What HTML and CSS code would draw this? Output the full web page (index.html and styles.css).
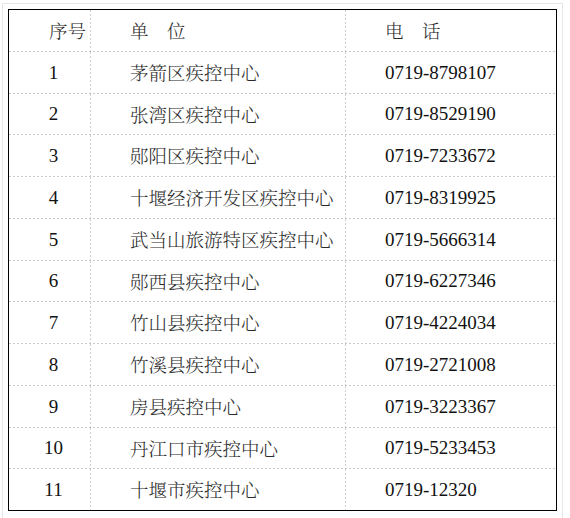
FILE: index.html
```html
<!DOCTYPE html>
<html lang="zh">
<head>
<meta charset="utf-8">
<link rel="stylesheet" href="styles.css">
</head>
<body>
<div class="frame">
  <div class="table">
    <div class="row head">
      <div class="cell c1 h1 cjk">序号</div>
      <div class="cell c2 cjk">单　位</div>
      <div class="cell c3 cjk">电　话</div>
    </div>
    <div class="row"><div class="cell c1">1</div><div class="cell c2 cjk">茅箭区疾控中心</div><div class="cell c3">0719-8798107</div></div>
    <div class="row"><div class="cell c1">2</div><div class="cell c2 cjk">张湾区疾控中心</div><div class="cell c3">0719-8529190</div></div>
    <div class="row"><div class="cell c1">3</div><div class="cell c2 cjk">郧阳区疾控中心</div><div class="cell c3">0719-7233672</div></div>
    <div class="row"><div class="cell c1">4</div><div class="cell c2 cjk">十堰经济开发区疾控中心</div><div class="cell c3">0719-8319925</div></div>
    <div class="row"><div class="cell c1">5</div><div class="cell c2 cjk">武当山旅游特区疾控中心</div><div class="cell c3">0719-5666314</div></div>
    <div class="row"><div class="cell c1">6</div><div class="cell c2 cjk">郧西县疾控中心</div><div class="cell c3">0719-6227346</div></div>
    <div class="row"><div class="cell c1">7</div><div class="cell c2 cjk">竹山县疾控中心</div><div class="cell c3">0719-4224034</div></div>
    <div class="row"><div class="cell c1">8</div><div class="cell c2 cjk">竹溪县疾控中心</div><div class="cell c3">0719-2721008</div></div>
    <div class="row"><div class="cell c1">9</div><div class="cell c2 cjk">房县疾控中心</div><div class="cell c3">0719-3223367</div></div>
    <div class="row"><div class="cell c1">10</div><div class="cell c2 cjk">丹江口市疾控中心</div><div class="cell c3">0719-5233453</div></div>
    <div class="row last"><div class="cell c1">11</div><div class="cell c2 cjk">十堰市疾控中心</div><div class="cell c3">0719-12320</div></div>
  </div>
</div>
</body>
</html>
```
FILE: styles.css
```css
html, body {
  margin: 0;
  padding: 0;
  background: #ffffff;
}
body {
  width: 570px;
  height: 518px;
  overflow: hidden;
  font-family: "Liberation Serif", "Noto Serif CJK SC", "Noto Sans CJK SC", serif;
  color: #111111;
}
.frame {
  margin: 3px 0 0 2px;
  width: 549px;
  height: 530px;
  border: 1px solid #e6e6e6;
  border-bottom: none;
  padding: 5px 5px 0 5px;
}
.table {
  width: 547px;
  border: 1px solid #000000;
  display: flex;
  flex-direction: column;
}
.row {
  display: grid;
  grid-template-columns: 82px 255px 1fr;
  height: 41.75px;
  box-sizing: border-box;
  padding-bottom: 1px;
  background-image: repeating-linear-gradient(to right, #c9c9c9 0 2px, transparent 2px 4px);
  background-size: 100% 1px;
  background-position: left bottom;
  background-repeat: no-repeat;
}
.row.last {
  background-image: none;
  padding-bottom: 0;
  height: 40.75px;
}
.cell {
  display: flex;
  align-items: center;
  font-size: 19px;
  line-height: 1;
  white-space: nowrap;
}
.c1,
.c2 {
  background-image: repeating-linear-gradient(to bottom, #cfcfcf 0 2px, transparent 2px 4px);
  background-size: 1px 100%;
  background-position: right top;
  background-repeat: no-repeat;
}
.c1 {
  justify-content: center;
  padding-left: 7px;
}
.c1.h1 {
  justify-content: flex-start;
  padding-left: 40px;
}
.c2 {
  padding-left: 39px;
}
.c3 {
  padding-left: 39px;
}
.cjk {
  font-family: "Noto Serif CJK SC", "Noto Sans CJK SC", serif;
  font-weight: 300;
  color: #2a2a2a;
  font-size: 18.5px;
}
```
